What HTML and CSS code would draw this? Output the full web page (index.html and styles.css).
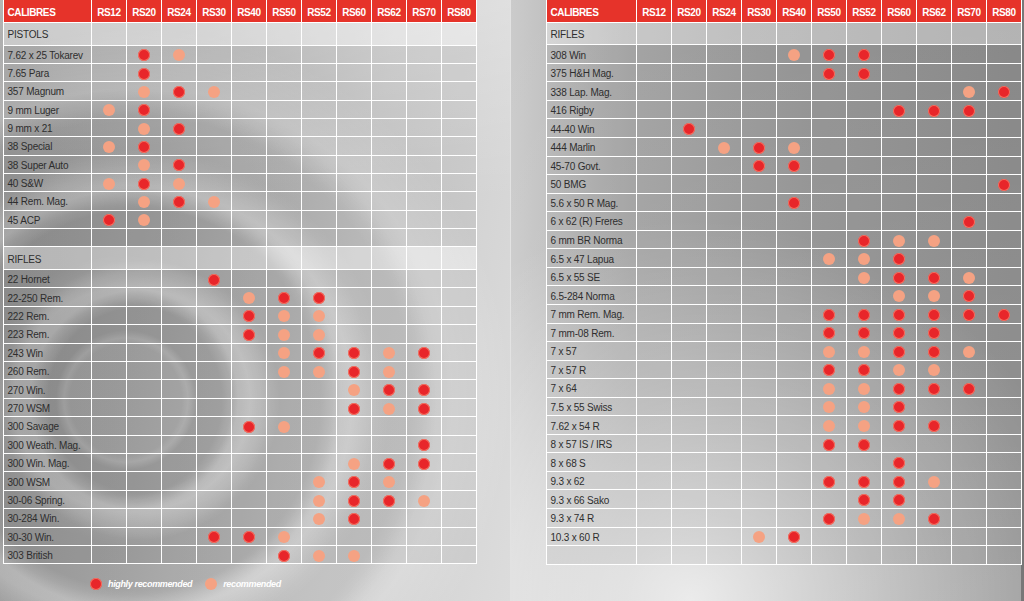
FILE: index.html
```html
<!DOCTYPE html>
<html lang="en">
<head>
<meta charset="utf-8">
<title>Calibres chart</title>
<link rel="stylesheet" href="styles.css">
</head>
<body>
<div class="spread">
  <section class="page page-left">
    <div class="chart chart-left">
      <div class="r hd"><span>CALIBRES</span><span>RS12</span><span>RS20</span><span>RS24</span><span>RS30</span><span>RS40</span><span>RS50</span><span>RS52</span><span>RS60</span><span>RS62</span><span>RS70</span><span>RS80</span></div>
      <div class="r sec"><span>PISTOLS</span><span></span><span></span><span></span><span></span><span></span><span></span><span></span><span></span><span></span><span></span><span></span></div>
      <div class="r"><span>7.62 x 25 Tokarev</span><span></span><span><i class="h"></i></span><span><i class="m"></i></span><span></span><span></span><span></span><span></span><span></span><span></span><span></span><span></span></div>
      <div class="r"><span>7.65 Para</span><span></span><span><i class="h"></i></span><span></span><span></span><span></span><span></span><span></span><span></span><span></span><span></span><span></span></div>
      <div class="r"><span>357 Magnum</span><span></span><span><i class="m"></i></span><span><i class="h"></i></span><span><i class="m"></i></span><span></span><span></span><span></span><span></span><span></span><span></span><span></span></div>
      <div class="r"><span>9 mm Luger</span><span><i class="m"></i></span><span><i class="h"></i></span><span></span><span></span><span></span><span></span><span></span><span></span><span></span><span></span><span></span></div>
      <div class="r"><span>9 mm x 21</span><span></span><span><i class="m"></i></span><span><i class="h"></i></span><span></span><span></span><span></span><span></span><span></span><span></span><span></span><span></span></div>
      <div class="r"><span>38 Special</span><span><i class="m"></i></span><span><i class="h"></i></span><span></span><span></span><span></span><span></span><span></span><span></span><span></span><span></span><span></span></div>
      <div class="r"><span>38 Super Auto</span><span></span><span><i class="m"></i></span><span><i class="h"></i></span><span></span><span></span><span></span><span></span><span></span><span></span><span></span><span></span></div>
      <div class="r"><span>40 S&amp;W</span><span><i class="m"></i></span><span><i class="h"></i></span><span><i class="m"></i></span><span></span><span></span><span></span><span></span><span></span><span></span><span></span><span></span></div>
      <div class="r"><span>44 Rem. Mag.</span><span></span><span><i class="m"></i></span><span><i class="h"></i></span><span><i class="m"></i></span><span></span><span></span><span></span><span></span><span></span><span></span><span></span></div>
      <div class="r"><span>45 ACP</span><span><i class="h"></i></span><span><i class="m"></i></span><span></span><span></span><span></span><span></span><span></span><span></span><span></span><span></span><span></span></div>
      <div class="r"><span></span><span></span><span></span><span></span><span></span><span></span><span></span><span></span><span></span><span></span><span></span><span></span></div>
      <div class="r sec"><span>RIFLES</span><span></span><span></span><span></span><span></span><span></span><span></span><span></span><span></span><span></span><span></span><span></span></div>
      <div class="r"><span>22 Hornet</span><span></span><span></span><span></span><span><i class="h"></i></span><span></span><span></span><span></span><span></span><span></span><span></span><span></span></div>
      <div class="r"><span>22-250 Rem.</span><span></span><span></span><span></span><span></span><span><i class="m"></i></span><span><i class="h"></i></span><span><i class="h"></i></span><span></span><span></span><span></span><span></span></div>
      <div class="r"><span>222 Rem.</span><span></span><span></span><span></span><span></span><span><i class="h"></i></span><span><i class="m"></i></span><span><i class="m"></i></span><span></span><span></span><span></span><span></span></div>
      <div class="r"><span>223 Rem.</span><span></span><span></span><span></span><span></span><span><i class="h"></i></span><span><i class="m"></i></span><span><i class="m"></i></span><span></span><span></span><span></span><span></span></div>
      <div class="r"><span>243 Win</span><span></span><span></span><span></span><span></span><span></span><span><i class="m"></i></span><span><i class="h"></i></span><span><i class="h"></i></span><span><i class="m"></i></span><span><i class="h"></i></span><span></span></div>
      <div class="r"><span>260 Rem.</span><span></span><span></span><span></span><span></span><span></span><span><i class="m"></i></span><span><i class="m"></i></span><span><i class="h"></i></span><span><i class="m"></i></span><span></span><span></span></div>
      <div class="r"><span>270 Win.</span><span></span><span></span><span></span><span></span><span></span><span></span><span></span><span><i class="m"></i></span><span><i class="h"></i></span><span><i class="h"></i></span><span></span></div>
      <div class="r"><span>270 WSM</span><span></span><span></span><span></span><span></span><span></span><span></span><span></span><span><i class="h"></i></span><span><i class="m"></i></span><span><i class="h"></i></span><span></span></div>
      <div class="r"><span>300 Savage</span><span></span><span></span><span></span><span></span><span><i class="h"></i></span><span><i class="m"></i></span><span></span><span></span><span></span><span></span><span></span></div>
      <div class="r"><span>300 Weath. Mag.</span><span></span><span></span><span></span><span></span><span></span><span></span><span></span><span></span><span></span><span><i class="h"></i></span><span></span></div>
      <div class="r"><span>300 Win. Mag.</span><span></span><span></span><span></span><span></span><span></span><span></span><span></span><span><i class="m"></i></span><span><i class="h"></i></span><span><i class="h"></i></span><span></span></div>
      <div class="r"><span>300 WSM</span><span></span><span></span><span></span><span></span><span></span><span></span><span><i class="m"></i></span><span><i class="h"></i></span><span><i class="m"></i></span><span></span><span></span></div>
      <div class="r"><span>30-06 Spring.</span><span></span><span></span><span></span><span></span><span></span><span></span><span><i class="m"></i></span><span><i class="h"></i></span><span><i class="h"></i></span><span><i class="m"></i></span><span></span></div>
      <div class="r"><span>30-284 Win.</span><span></span><span></span><span></span><span></span><span></span><span></span><span><i class="m"></i></span><span><i class="h"></i></span><span></span><span></span><span></span></div>
      <div class="r"><span>30-30 Win.</span><span></span><span></span><span></span><span><i class="h"></i></span><span><i class="h"></i></span><span><i class="m"></i></span><span></span><span></span><span></span><span></span><span></span></div>
      <div class="r"><span>303 British</span><span></span><span></span><span></span><span></span><span></span><span><i class="h"></i></span><span><i class="m"></i></span><span><i class="m"></i></span><span></span><span></span><span></span></div>
    </div>
    <div class="legend">
      <i class="h"></i><span class="legend-text">highly recommended</span>
      <i class="m legend-gap"></i><span class="legend-text">recommended</span>
    </div>
  </section>
  <div class="fold"></div>
  <section class="page page-right">
    <div class="chart chart-right">
      <div class="r hd"><span>CALIBRES</span><span>RS12</span><span>RS20</span><span>RS24</span><span>RS30</span><span>RS40</span><span>RS50</span><span>RS52</span><span>RS60</span><span>RS62</span><span>RS70</span><span>RS80</span></div>
      <div class="r sec"><span>RIFLES</span><span></span><span></span><span></span><span></span><span></span><span></span><span></span><span></span><span></span><span></span><span></span></div>
      <div class="r"><span>308 Win</span><span></span><span></span><span></span><span></span><span><i class="m"></i></span><span><i class="h"></i></span><span><i class="h"></i></span><span></span><span></span><span></span><span></span></div>
      <div class="r"><span>375 H&amp;H Mag.</span><span></span><span></span><span></span><span></span><span></span><span><i class="h"></i></span><span><i class="h"></i></span><span></span><span></span><span></span><span></span></div>
      <div class="r"><span>338 Lap. Mag.</span><span></span><span></span><span></span><span></span><span></span><span></span><span></span><span></span><span></span><span><i class="m"></i></span><span><i class="h"></i></span></div>
      <div class="r"><span>416 Rigby</span><span></span><span></span><span></span><span></span><span></span><span></span><span></span><span><i class="h"></i></span><span><i class="h"></i></span><span><i class="h"></i></span><span></span></div>
      <div class="r"><span>44-40 Win</span><span></span><span><i class="h"></i></span><span></span><span></span><span></span><span></span><span></span><span></span><span></span><span></span><span></span></div>
      <div class="r"><span>444 Marlin</span><span></span><span></span><span><i class="m"></i></span><span><i class="h"></i></span><span><i class="m"></i></span><span></span><span></span><span></span><span></span><span></span><span></span></div>
      <div class="r"><span>45-70 Govt.</span><span></span><span></span><span></span><span><i class="h"></i></span><span><i class="h"></i></span><span></span><span></span><span></span><span></span><span></span><span></span></div>
      <div class="r"><span>50 BMG</span><span></span><span></span><span></span><span></span><span></span><span></span><span></span><span></span><span></span><span></span><span><i class="h"></i></span></div>
      <div class="r"><span>5.6 x 50 R Mag.</span><span></span><span></span><span></span><span></span><span><i class="h"></i></span><span></span><span></span><span></span><span></span><span></span><span></span></div>
      <div class="r"><span>6 x 62 (R) Freres</span><span></span><span></span><span></span><span></span><span></span><span></span><span></span><span></span><span></span><span><i class="h"></i></span><span></span></div>
      <div class="r"><span>6 mm BR Norma</span><span></span><span></span><span></span><span></span><span></span><span></span><span><i class="h"></i></span><span><i class="m"></i></span><span><i class="m"></i></span><span></span><span></span></div>
      <div class="r"><span>6.5 x 47 Lapua</span><span></span><span></span><span></span><span></span><span></span><span><i class="m"></i></span><span><i class="m"></i></span><span><i class="h"></i></span><span></span><span></span><span></span></div>
      <div class="r"><span>6.5 x 55 SE</span><span></span><span></span><span></span><span></span><span></span><span></span><span><i class="m"></i></span><span><i class="h"></i></span><span><i class="h"></i></span><span><i class="m"></i></span><span></span></div>
      <div class="r"><span>6.5-284 Norma</span><span></span><span></span><span></span><span></span><span></span><span></span><span></span><span><i class="m"></i></span><span><i class="m"></i></span><span><i class="h"></i></span><span></span></div>
      <div class="r"><span>7 mm Rem. Mag.</span><span></span><span></span><span></span><span></span><span></span><span><i class="h"></i></span><span><i class="h"></i></span><span><i class="h"></i></span><span><i class="h"></i></span><span><i class="h"></i></span><span><i class="h"></i></span></div>
      <div class="r"><span>7 mm-08 Rem.</span><span></span><span></span><span></span><span></span><span></span><span><i class="h"></i></span><span><i class="h"></i></span><span><i class="h"></i></span><span><i class="h"></i></span><span></span><span></span></div>
      <div class="r"><span>7 x 57</span><span></span><span></span><span></span><span></span><span></span><span><i class="m"></i></span><span><i class="m"></i></span><span><i class="h"></i></span><span><i class="h"></i></span><span><i class="m"></i></span><span></span></div>
      <div class="r"><span>7 x 57 R</span><span></span><span></span><span></span><span></span><span></span><span><i class="h"></i></span><span><i class="h"></i></span><span><i class="m"></i></span><span><i class="m"></i></span><span></span><span></span></div>
      <div class="r"><span>7 x 64</span><span></span><span></span><span></span><span></span><span></span><span><i class="m"></i></span><span><i class="m"></i></span><span><i class="h"></i></span><span><i class="h"></i></span><span><i class="h"></i></span><span></span></div>
      <div class="r"><span>7.5 x 55 Swiss</span><span></span><span></span><span></span><span></span><span></span><span><i class="m"></i></span><span><i class="m"></i></span><span><i class="h"></i></span><span></span><span></span><span></span></div>
      <div class="r"><span>7.62 x 54 R</span><span></span><span></span><span></span><span></span><span></span><span><i class="m"></i></span><span><i class="m"></i></span><span><i class="h"></i></span><span><i class="h"></i></span><span></span><span></span></div>
      <div class="r"><span>8 x 57 IS / IRS</span><span></span><span></span><span></span><span></span><span></span><span><i class="h"></i></span><span><i class="h"></i></span><span></span><span></span><span></span><span></span></div>
      <div class="r"><span>8 x 68 S</span><span></span><span></span><span></span><span></span><span></span><span></span><span></span><span><i class="h"></i></span><span></span><span></span><span></span></div>
      <div class="r"><span>9.3 x 62</span><span></span><span></span><span></span><span></span><span></span><span><i class="h"></i></span><span><i class="h"></i></span><span><i class="h"></i></span><span><i class="m"></i></span><span></span><span></span></div>
      <div class="r"><span>9.3 x 66 Sako</span><span></span><span></span><span></span><span></span><span></span><span></span><span><i class="h"></i></span><span><i class="h"></i></span><span></span><span></span><span></span></div>
      <div class="r"><span>9.3 x 74 R</span><span></span><span></span><span></span><span></span><span></span><span><i class="h"></i></span><span><i class="m"></i></span><span><i class="m"></i></span><span><i class="h"></i></span><span></span><span></span></div>
      <div class="r"><span>10.3 x 60 R</span><span></span><span></span><span></span><span><i class="m"></i></span><span><i class="h"></i></span><span></span><span></span><span></span><span></span><span></span><span></span></div>
      <div class="r"><span></span><span></span><span></span><span></span><span></span><span></span><span></span><span></span><span></span><span></span><span></span><span></span></div>
    </div>
  </section>
</div>
</body>
</html>
```

FILE: styles.css
```css
html, body {
  margin: 0;
  padding: 0;
}

body {
  width: 1024px;
  height: 601px;
  overflow: hidden;
  background: #c4c4c4;
  font-family: "Liberation Sans", Arial, sans-serif;
}

.spread {
  display: flex;
  height: 601px;
}

.page {
  box-sizing: border-box;
  height: 601px;
}

.page-left {
  width: 510px;
  padding-left: 3px;
  background:
    radial-gradient(circle at 140px 400px,
      rgba(255,255,255,0) 0,
      rgba(255,255,255,0) 92px,
      rgba(255,255,255,0.26) 110px,
      rgba(255,255,255,0.12) 128px,
      rgba(255,255,255,0) 140px,
      rgba(255,255,255,0) 190px,
      rgba(255,255,255,0.24) 212px,
      rgba(255,255,255,0.08) 236px,
      rgba(255,255,255,0) 250px,
      rgba(255,255,255,0) 282px,
      rgba(255,255,255,0.18) 312px,
      rgba(255,255,255,0) 372px),
    radial-gradient(circle at 126px 400px,
      rgba(0,0,0,0.05) 0,
      rgba(0,0,0,0.05) 56px,
      rgba(0,0,0,0) 62px,
      rgba(0,0,0,0.10) 70px,
      rgba(0,0,0,0.10) 96px,
      rgba(0,0,0,0) 112px,
      rgba(0,0,0,0.08) 145px,
      rgba(0,0,0,0.08) 195px,
      rgba(0,0,0,0) 215px,
      rgba(0,0,0,0.05) 250px,
      rgba(0,0,0,0.05) 285px,
      rgba(0,0,0,0) 310px),
    linear-gradient(180deg, rgba(255,255,255,0.28) 0, rgba(255,255,255,0) 200px),
    linear-gradient(100deg, #999999 0%, #ababab 30%, #cbcbcb 65%, #dcdcdc 100%);
}

.fold {
  width: 1px;
  height: 601px;
  background: #e2e2e2;
}

.page-right {
  flex: 1;
  padding-left: 35px;
  background:
    radial-gradient(ellipse 400px 380px at 180px 600px,
      rgba(255,255,255,0.75) 0,
      rgba(255,255,255,0.35) 50%,
      rgba(255,255,255,0) 100%),
    linear-gradient(180deg, rgba(255,255,255,0.05) 0, rgba(255,255,255,0.15) 100%),
    linear-gradient(90deg, #c8c8c8 0, #a8a8a8 120px, #979797 300px, #8a8a8a 500px);
  box-shadow: inset -3px 0 0 #777;
}

/* chart grid */
.chart {
  display: grid;
  width: max-content;
  border-left: 1px solid #fff;
}

.chart-left {
  grid-template-columns: 88px repeat(11, 35px);
  grid-template-rows: 23px 22.5px repeat(11, 18.35px) 22.7px repeat(16, 18.42px);
}

.chart-right {
  grid-template-columns: 90px repeat(11, 35px);
  grid-template-rows: 23px 22.3px repeat(28, 18.55px);
}

.r {
  display: contents;
}

.r > span {
  box-sizing: border-box;
  display: flex;
  align-items: center;
  justify-content: center;
  padding-top: 2px;
  border-right: 1px solid #fff;
  border-bottom: 1px solid #fff;
  background: rgba(0,0,0,0.05);
  color: #2e2e2e;
  font-size: 10px;
  letter-spacing: -0.2px;
  white-space: nowrap;
  overflow: hidden;
}

.r > span:first-child {
  justify-content: flex-start;
  padding-left: 3.5px;
}

.hd > span {
  background: #e6332a;
  color: #fff;
  font-weight: bold;
  font-size: 10px;
  letter-spacing: -0.4px;
}

.sec > span {
  background: rgba(255,255,255,0.32);
}

/* dots */
.h, .m {
  display: block;
  width: 12px;
  height: 12px;
  border-radius: 50%;
  flex: none;
}

.h {
  background: #e8262a;
  box-shadow: inset 0 0 0 1px rgba(245,128,108,0.85);
}

.m {
  background: #f5a283;
}

/* legend */
.legend {
  display: flex;
  align-items: center;
  margin: 14px 0 0 87px;
  height: 12px;
}

.legend-text {
  margin-left: 6px;
  color: #fff;
  font-size: 9px;
  font-weight: bold;
  font-style: italic;
  letter-spacing: -0.35px;
}

.legend-gap {
  margin-left: 13px;
}
```
